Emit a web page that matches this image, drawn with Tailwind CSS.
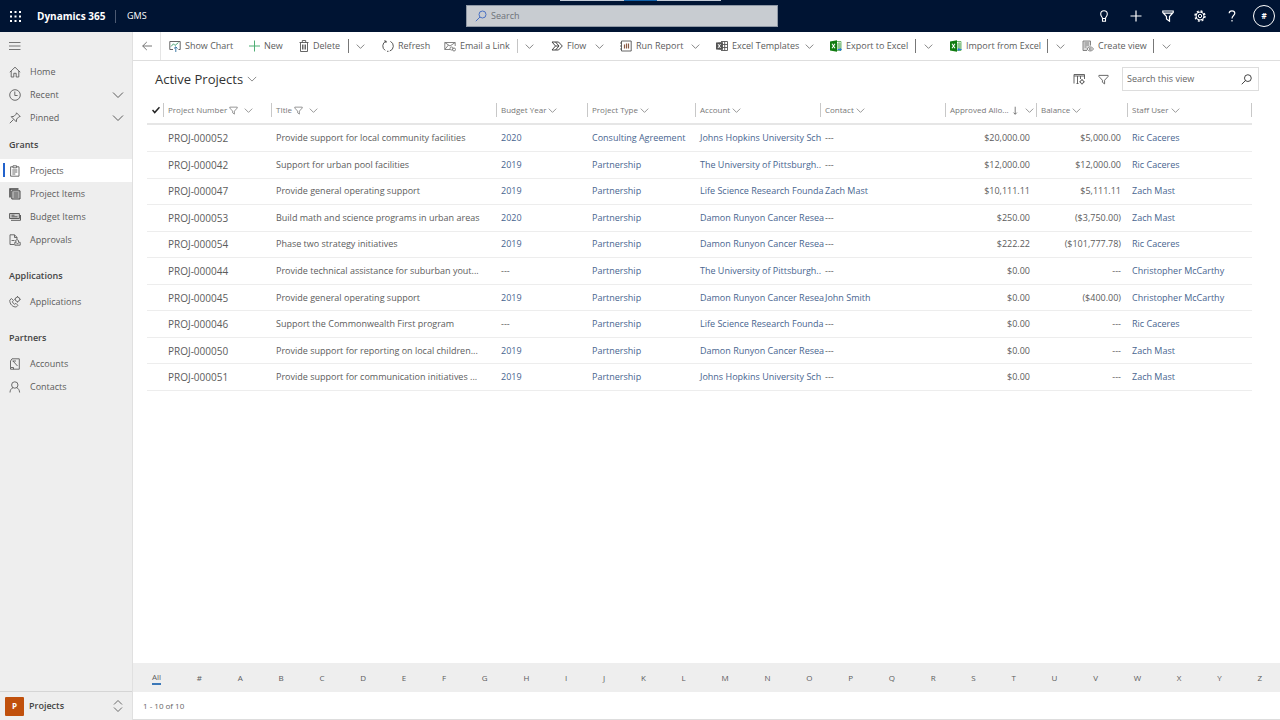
<!DOCTYPE html>
<html lang="en">
<head>
    <meta charset="UTF-8">
    <meta name="viewport" content="width=device-width, initial-scale=1.0">
    <title>Active Projects - Dynamics 365</title>
    <script src="https://cdn.jsdelivr.net/npm/@tailwindcss/browser@4"></script>
</head>
<body class="bg-white h-screen flex flex-col overflow-hidden font-['Open_Sans','Noto_Sans',sans-serif] text-[9px] leading-3 text-[#5c5c5c]">

    <!-- Shared icons -->
    <svg class="hidden">
        <symbol id="chevron" viewBox="0 0 12 12"><path d="M1 3.5l5 5 5-5" fill="none" stroke="currentColor"/></symbol>
        <symbol id="funnel" viewBox="0 0 12 12"><path d="M1 1.5h10v1.2L7.2 6.8v4L4.8 9V6.800L1 2.700z" fill="none" stroke="currentColor"/></symbol>
        <symbol id="excel" viewBox="0 0 12 12">
            <path d="M6.500 1.500h4.500v9H6.500M7 4h4M7 6h4M7 8h4M9 2v8" fill="none" stroke="#4fa64f" stroke-width=".8"/>
            <path d="M0 1.500L7 .3v11.400L0 10.500z" fill="#107c10"/>
            <path d="M2 3.800l3 4.400M5 3.800L2 8.200" stroke="#fff" stroke-width="1.100"/>
        </symbol>
    </svg>

    <header class="relative shrink-0 h-8 bg-[#001433] text-white grid grid-cols-[466fr_312fr_502fr] items-center">
        <div class="absolute top-0 left-[560px] w-[161px] h-px flex">
            <span class="flex-[4] bg-[#c3cad6]"></span><span class="flex-[2] bg-[#1160a8]"></span><span class="flex-[4] bg-[#c3cad6]"></span>
        </div>
        <div class="flex items-center pl-[10px]">
            <button aria-label="App launcher">
                <svg class="w-[11px] h-[11px]" viewBox="0 0 11 11" fill="currentColor">
                    <path d="M0 0h2v2H0zM4.500 0h2v2h-2zM9 0h2v2H9zM0 4.500h2v2H0zM4.500 4.500h2v2h-2zM9 4.500h2v2H9zM0 9h2v2H0zM4.500 9h2v2h-2zM9 9h2v2H9z"/>
                </svg>
            </button>
            <span class="ml-4 w-[78px] text-[10px] font-bold whitespace-nowrap">Dynamics 365</span>
            <span class="w-px h-[13px] bg-[#4d5a72]"></span>
            <span class="ml-[11px]">GMS</span>
        </div>
        <label class="h-[22px] flex items-center gap-1 px-2 bg-[#c8ccd1] border border-[#8f98a5] text-[#666]">
            <svg class="w-3 h-3 text-[#4a72c4]" viewBox="0 0 12 12" fill="none" stroke="currentColor"><circle cx="7.500" cy="4.500" r="3.500"/><path d="M5 7L.8 11.200"/></svg>
            <input type="text" aria-label="Search" placeholder="Search" class="flex-1 outline-none placeholder:text-[#6d7278]">
        </label>
        <div class="flex items-center justify-end gap-5 pr-[5px]">
            <button aria-label="Assistant"><svg class="w-3 h-3" viewBox="0 0 12 12" fill="none" stroke="currentColor" stroke-width="1.100"><path d="M4.500 8.500C4.500 7 2.700 6.300 2.700 4a3.300 3.300 0 016.600 0c0 2.300-1.800 3-1.800 4.500zM4.500 8.500v2.700h3V8.500"/></svg></button>
            <button aria-label="New record"><svg class="w-3 h-3" viewBox="0 0 12 12" fill="none" stroke="currentColor" stroke-width="1.200"><path d="M6 .5v11M.5 6h11"/></svg></button>
            <button aria-label="Advanced find"><svg class="w-3 h-3" viewBox="0 0 12 12" fill="none" stroke="currentColor" stroke-width="1.200"><path d="M.8 1h10.400v1.500L7.500 6.500v4.700L4.500 9V6.500L.8 2.500zM1.500 3.200h9"/></svg></button>
            <button aria-label="Settings"><svg class="w-3 h-3" viewBox="0 0 12 12" fill="none" stroke="currentColor"><circle cx="6" cy="6" r="1.700"/><circle cx="6" cy="6" r="4"/><circle cx="6" cy="6" r="5" stroke-width="1.400" stroke-dasharray="2 1.930"/></svg></button>
            <button aria-label="Help"><svg class="w-3 h-3" viewBox="0 0 12 12" fill="none" stroke="currentColor" stroke-width="1.200"><path d="M3.200 3.300C3.200 1.700 4.300.8 6 .8s2.800 1 2.800 2.500C8.800 5.500 6 5.500 6 8.500"/><path d="M6 10v1.500"/></svg></button>
            <button class="-ml-[5px] w-[22px] h-[22px] rounded-full border border-white text-[8px] font-bold">#</button>
        </div>
    </header>

    <div class="flex-1 flex min-h-0">
        <nav class="w-[133px] shrink-0 bg-[#eeeeee] border-r border-[#e0e0e0] flex flex-col">
            <button aria-label="Collapse menu" class="h-[28px] pl-[9px]">
                <svg class="w-3 h-3" viewBox="0 0 12 12" stroke="#555" stroke-width=".8"><path d="M0 2.500h11.500M0 6h11.500M0 9.500h11.500"/></svg>
            </button>
            <a href="#" class="h-[23px] flex items-center gap-[9px] pl-[9px]">
                <svg class="w-3 h-3" viewBox="0 0 12 12" fill="none" stroke="currentColor" stroke-width=".9"><path d="M.8 6.200L6 1.200l5.200 5M2.200 5v6h2.600V7.300h2.400V11h2.600V5"/></svg>
                Home
            </a>
            <button class="h-[23px] flex items-center gap-[9px] pl-[9px] pr-2">
                <svg class="w-3 h-3" viewBox="0 0 12 12" fill="none" stroke="currentColor" stroke-width=".9"><circle cx="6" cy="6" r="5.300"/><path d="M5.800 2.500v4H8.600"/></svg>
                Recent
                <svg class="ml-auto w-3 h-3"><use href="#chevron"/></svg>
            </button>
            <button class="h-[23px] flex items-center gap-[9px] pl-[9px] pr-2">
                <svg class="w-3 h-3" viewBox="0 0 12 12" fill="none" stroke="currentColor" stroke-width=".9"><path d="M7.500.8l3.700 3.700-1.300.3-2.200 2.200-.4 2.800L2.200 4.700l2.800-.4 2.200-2.200zM4.500 7.500L.8 11.200"/></svg>
                Pinned
                <svg class="ml-auto w-3 h-3"><use href="#chevron"/></svg>
            </button>

            <h2 class="mt-1 mb-[3px] h-[23px] pl-[9px] flex items-center font-semibold text-[#444]">Grants</h2>
            <a href="#" class="relative h-[23px] flex items-center gap-[9px] pl-[9px] bg-white">
                <span class="absolute left-[3px] top-1 w-[2px] h-[14px] bg-[#2262cc]"></span>
                <svg class="w-3 h-3" viewBox="0 0 12 12" fill="none" stroke="currentColor" stroke-width=".9"><path d="M4 1.800H1.600v9.400h8.400V1.800H7.600M4 .8h3.600v2H4zM3.300 5h5M3.300 7h5M3.300 9h3"/></svg>
                Projects
            </a>
            <a href="#" class="h-[23px] flex items-center gap-[9px] pl-[9px]">
                <svg class="w-3 h-3" viewBox="0 0 12 12" fill="none" stroke="#444"><path d="M2.800 2.800h8.200v8.200H2.800z" fill="#ccc"/><path d="M1 9.500V1h8.500" stroke-width="1.500"/><path d="M4.500 5h5M4.500 7h5M4.500 9h5"/></svg>
                Project Items
            </a>
            <a href="#" class="h-[23px] flex items-center gap-[9px] pl-[9px]">
                <svg class="w-3 h-3" viewBox="0 0 12 12" fill="none" stroke="currentColor"><path d="M.6 2.500h9.800v5H.6z" fill="#ccc"/><path d="M2 9.300h9.500V4M2.500 4.200h3M2.500 5.800h6"/></svg>
                Budget Items
            </a>
            <a href="#" class="h-[23px] flex items-center gap-[9px] pl-[9px]">
                <svg class="w-3 h-3" viewBox="0 0 12 12" fill="none" stroke="currentColor" stroke-width=".9"><path d="M5 10.500H1V.8h4.500l2.500 2.500V5M5.500.8v2.700H8M2.500 6.500h3"/><path d="M6.500 6.800c0-1.500 3-1.500 3 0v1.500h1.700v2.900H5.800V8.300h1.500zM7.500 9.700h2"/></svg>
                Approvals
            </a>

            <h2 class="mt-[13px] mb-[3px] h-[23px] pl-[9px] flex items-center font-semibold text-[#444]">Applications</h2>
            <a href="#" class="h-[23px] flex items-center gap-[9px] pl-[9px]">
                <svg class="w-3 h-3" viewBox="0 0 12 12" fill="none" stroke="currentColor" stroke-width=".9"><path d="M.8 4.200l1.600-1.700 2 2-1 1.300c.4 1.200 1.200 2 2.300 2.500l1.200-1 2 2-1.500 1.600C4 11.500.5 8 .8 4.200z"/><circle cx="8.500" cy="3.300" r="2.200"/><path d="M8.500 0v1M8.500 5.600v1M5.200 3.300h1M10.800 3.300h1"/></svg>
                Applications
            </a>

            <h2 class="mt-[13px] mb-[3px] h-[23px] pl-[9px] flex items-center font-semibold text-[#444]">Partners</h2>
            <a href="#" class="h-[23px] flex items-center gap-[9px] pl-[9px]">
                <svg class="w-3 h-3" viewBox="0 0 12 12" fill="none" stroke="currentColor" stroke-width=".9"><path d="M3 .8h7.300v10.400H1.500V9.500M3 .8L1.500 3v6.500h3M4 3l4.500 5M4.500 9.500v1.700M3.500 3H7"/></svg>
                Accounts
            </a>
            <a href="#" class="h-[23px] flex items-center gap-[9px] pl-[9px]">
                <svg class="w-3 h-3" viewBox="0 0 12 12" fill="none" stroke="currentColor" stroke-width=".9"><circle cx="5.800" cy="4" r="3.200"/><path d="M1 11.500c0-2.500 1.500-4.300 3-4.800M10.600 11.500c0-2.500-1.500-4.300-3-4.800"/></svg>
                Contacts
            </a>

            <button class="mt-auto h-[29px] border-t border-[#d5d5d5] flex items-center pl-[5px] pr-2">
                <span class="w-[19px] h-[19px] rounded-[1px] bg-[#c0500c] text-white text-[8px] font-bold flex items-center justify-center">P</span>
                <span class="ml-[5px] font-semibold text-[#444]">Projects</span>
                <svg class="ml-auto w-3 h-3" viewBox="0 0 12 12" fill="none" stroke="currentColor" stroke-width=".9"><path d="M2 4.500l4-4 4 4M2 7.500l4 4 4-4"/></svg>
            </button>
        </nav>

        <main class="flex-1 min-w-0 flex flex-col">
            <!-- Command bar -->
            <div class="h-[29px] shrink-0 border-b border-[#dedede] flex items-center whitespace-nowrap overflow-hidden">
                <button aria-label="Back" class="w-7 h-full border-r border-[#e5e5e5] flex items-center justify-center">
                    <svg class="w-[10px] h-[10px]" viewBox="0 0 10 10" fill="none" stroke="#666" stroke-width=".9"><path d="M10 5H.7M4.800 1L.7 5l4.100 4"/></svg>
                </button>
                <button class="ml-2 w-[79px] flex items-center gap-1">
                    <svg class="w-3 h-3" viewBox="0 0 12 12" fill="none" stroke="#555" stroke-width=".9"><path d="M4 9.500H.8v-8h10.400v8H9.500"/><path d="M2 6.500l2.500-2.700L6 5.500l3.500-3" stroke="#3a9a6a"/><path d="M6.800 12V7M5 8.500L6.800 6.800l1.700 1.700" stroke="#2b6c9c"/></svg>
                    Show Chart
                </button>
                <button class="w-[50px] flex items-center gap-1">
                    <svg class="w-3 h-3" viewBox="0 0 12 12" stroke="#4fae75"><path d="M6.500 .5v11M1 6h11"/></svg>
                    New
                </button>
                <button class="w-[50px] flex items-center gap-[3px]">
                    <svg class="w-3 h-3" viewBox="0 0 12 12" fill="none" stroke="#555" stroke-width=".9"><path d="M1.500 2.500h9M4.300 2.500v-2h3.400v2M2.500 2.500v9h7v-9M4.500 4.500v5M6 4.500v5M7.500 4.500v5"/></svg>
                    Delete
                </button>
                <span class="w-px h-[14px] bg-[#777]"></span>
                <button aria-label="More delete options" class="w-[33px] pl-[7px]"><svg class="w-[9px] h-[9px]"><use href="#chevron"/></svg></button>
                <button class="w-[62px] flex items-center gap-1">
                    <svg class="w-3 h-3" viewBox="0 0 12 12" fill="none" stroke="#444" stroke-width=".9"><path d="M4 1.200a5.200 5.200 0 00-.8 9.200M7.800 11a5.200 5.200 0 00.6-9.600M5 11.300h1.500M2.200 .8L4.300 1.200 3.800 3"/></svg>
                    Refresh
                </button>
                <button class="w-[73px] flex items-center gap-1">
                    <svg class="w-3 h-3" viewBox="0 0 12 12" fill="none" stroke="#777" stroke-width=".9"><path d="M6 9.500H.8V2.500h10.400V6M.8 2.500L6 6l5.200-3.500M.8 9.500L4.500 5"/><circle cx="7.500" cy="8.500" r="1.500"/><circle cx="10" cy="9.500" r="1.500"/></svg>
                    Email a Link
                </button>
                <span class="w-px h-[14px] bg-[#c5c5c5]"></span>
                <button aria-label="More email options" class="w-[33px] pl-[7px]"><svg class="w-[9px] h-[9px]"><use href="#chevron"/></svg></button>
                <button class="w-[69px] flex items-center gap-1">
                    <svg class="w-3 h-3" viewBox="0 0 12 12" fill="none" stroke="#444"><path d="M1 2h6.500l3.800 4-3.800 4H1l3.500-4zM4.500 2L8 6l-3.500 4M4.500 6H8"/></svg>
                    <span class="w-6 text-left">Flow</span>
                    <svg class="w-[9px] h-[9px]"><use href="#chevron"/></svg>
                </button>
                <button class="w-24 flex items-center gap-1">
                    <svg class="w-3 h-3" viewBox="0 0 12 12" fill="none" stroke="#555" stroke-width=".9"><path d="M1.500 1h9.700v10H1.500zM0 3h2M0 6h2M0 9h2"/><path d="M4.500 8.500v-4M6.500 8.500v-5M8.500 8.500v-5" stroke="#8a5a44" stroke-width="1.200"/></svg>
                    <span class="w-[51px] text-left">Run Report</span>
                    <svg class="w-[9px] h-[9px]"><use href="#chevron"/></svg>
                </button>
                <button class="w-[114px] flex items-center gap-1">
                    <svg class="w-3 h-3" viewBox="0 0 12 12" fill="none" stroke="#555" stroke-width=".9"><path d="M5 1.500h6.500v9H5M6 4.500h5.500M6 7.500h5.500M8.700 1.500v9"/><path d="M0 3l6.500-.5v7L0 9z" fill="#555"/><path d="M2 4l2.500 4M4.500 4L2 8" stroke="#fff"/></svg>
                    <span class="w-[69px] text-left">Excel Templates</span>
                    <svg class="w-[9px] h-[9px]"><use href="#chevron"/></svg>
                </button>
                <button class="w-[85px] flex items-center gap-1">
                    <svg class="w-3 h-3" viewBox="0 0 12 12"><use href="#excel"/><path d="M7.500 9.500h3.500M9.800 8l1.500 1.500L9.800 11" fill="none" stroke="#2b7cd3"/></svg>
                    Export to Excel
                </button>
                <span class="w-px h-[14px] bg-[#777]"></span>
                <button aria-label="More export options" class="w-[34px] pl-2"><svg class="w-[9px] h-[9px]"><use href="#chevron"/></svg></button>
                <button class="w-[97px] flex items-center gap-1">
                    <svg class="w-3 h-3" viewBox="0 0 12 12"><use href="#excel"/><path d="M11.500 9.500H8M9.300 8L7.800 9.500 9.300 11" fill="none" stroke="#2b7cd3"/></svg>
                    Import from Excel
                </button>
                <span class="w-px h-[14px] bg-[#777]"></span>
                <button aria-label="More import options" class="w-[34px] pl-2"><svg class="w-[9px] h-[9px]"><use href="#chevron"/></svg></button>
                <button class="w-[71px] flex items-center gap-1">
                    <svg class="w-3 h-3" viewBox="0 0 12 12" fill="none" stroke="#777" stroke-width=".9"><path d="M5 10.500H1V1h7.500v4.500" fill="#ddd"/><path d="M2.500 3h4.500M2.500 5h4.500M2.500 7h2M5 9c1.500-2.800 5-2.800 6.500 0-1.500 2.600-5 2.600-6.500 0z"/><circle cx="8.300" cy="9" r="1"/></svg>
                    Create view
                </button>
                <span class="w-px h-[14px] bg-[#777]"></span>
                <button aria-label="More view options" class="pl-2"><svg class="w-[9px] h-[9px]"><use href="#chevron"/></svg></button>
            </div>

            <!-- View title and view search -->
            <div class="h-9 shrink-0 flex items-center pl-[22px] pr-[21px]">
                <h1><button class="flex items-center gap-1 text-[13px] leading-4 font-medium text-[#333]">Active Projects <svg class="w-[10px] h-[10px] text-[#777]"><use href="#chevron"/></svg></button></h1>
                <button aria-label="Edit columns" class="ml-auto">
                    <svg class="w-3 h-3" viewBox="0 0 12 12" fill="none" stroke="#555" stroke-width=".9"><path d="M1 10.500V1.500h10.500V6M1 3h10.500M4.500 3v7.500M3.500 10.500h2M7.500 3v3"/><circle cx="9" cy="8.800" r="1.700"/><path d="M9 6v1M9 10.500v1M6.300 8.800h1M10.700 8.800h1"/></svg>
                </button>
                <button aria-label="Edit filters" class="ml-[13px] mr-[13px]"><svg class="w-[11px] h-[11px]"><use href="#funnel"/></svg></button>
                <label class="w-[137px] h-6 flex items-center px-1 border border-[#ddd]">
                    <input type="text" aria-label="Search this view" placeholder="Search this view" class="flex-1 min-w-0 outline-none placeholder:text-[#666]">
                    <svg class="w-[11px] h-[11px] mr-[2px]" viewBox="0 0 12 12" fill="none" stroke="#333"><circle cx="7.500" cy="4.500" r="3.700"/><path d="M5 7L.8 11.200"/></svg>
                </label>
            </div>

            <div class="flex-1 min-h-0 overflow-hidden pl-[14px] pr-7">
                <table class="w-full h-[294px] table-fixed border-collapse whitespace-nowrap">
                    <colgroup>
                        <col class="w-4"><col class="w-[108px]"><col class="w-[225px]"><col class="w-[91px]"><col class="w-[108px]">
                        <col class="w-[125px]"><col class="w-[125px]"><col class="w-[91px]"><col class="w-[91px]"><col>
                    </colgroup>
                    <thead id="gridHead" class="border-b-2 border-[#e6e6e6] text-[8px] text-[#777]"></thead>
                    <tbody id="gridBody"></tbody>
                </table>
            </div>

            <!-- Jump bar -->
            <div id="jumpBar" class="h-[29px] shrink-0 bg-[#eeeeee] pl-[19px] pr-[18px] flex items-center justify-between text-[8px]">
                <button class="border-b-2 border-[#3b78b8]">All</button>
            </div>
            <div class="h-7 shrink-0 border-b border-[#ddd] pl-[10px] flex items-center text-[8px] text-[#666]">1 - 10 of 10</div>
        </main>
    </div>

    <script>
        const columns = [
            { label: 'Project Number', filtered: true },
            { label: 'TItle', filtered: true },
            { label: 'Budget Year' },
            { label: 'Project Type' },
            { label: 'Account' },
            { label: 'Contact' },
            { label: 'Approved Allo...', sorted: true },
            { label: 'Balance' },
            { label: 'Staff User' }
        ];

        const projects = [
            ['PROJ-000052', 'Provide support for local community facilities', '2020', 'Consulting Agreement', 'Johns Hopkins University Sch', '---', '$20,000.00', '$5,000.00', 'Ric Caceres'],
            ['PROJ-000042', 'Support for urban pool facilities', '2019', 'Partnership', 'The University of Pittsburgh..', '---', '$12,000.00', '$12,000.00', 'Ric Caceres'],
            ['PROJ-000047', 'Provide general operating support', '2019', 'Partnership', 'Life Science Research Founda', 'Zach Mast', '$10,111.11', '$5,111.11', 'Zach Mast'],
            ['PROJ-000053', 'Build math and science programs in urban areas', '2020', 'Partnership', 'Damon Runyon Cancer Resea', '---', '$250.00', '($3,750.00)', 'Zach Mast'],
            ['PROJ-000054', 'Phase two strategy initiatives', '2019', 'Partnership', 'Damon Runyon Cancer Resea', '---', '$222.22', '($101,777.78)', 'Ric Caceres'],
            ['PROJ-000044', 'Provide technical assistance for suburban yout...', '---', 'Partnership', 'The University of Pittsburgh..', '---', '$0.00', '---', 'Christopher McCarthy'],
            ['PROJ-000045', 'Provide general operating support', '2019', 'Partnership', 'Damon Runyon Cancer Resea', 'John Smith', '$0.00', '($400.00)', 'Christopher McCarthy'],
            ['PROJ-000046', 'Support the Commonwealth First program', '---', 'Partnership', 'Life Science Research Founda', '---', '$0.00', '---', 'Ric Caceres'],
            ['PROJ-000050', 'Provide support for reporting on local children...', '2019', 'Partnership', 'Damon Runyon Cancer Resea', '---', '$0.00', '---', 'Zach Mast'],
            ['PROJ-000051', 'Provide support for communication initiatives ...', '2019', 'Partnership', 'Johns Hopkins University Sch', '---', '$0.00', '---', 'Zach Mast']
        ];

        // Header row
        const chevron = '<svg class="shrink-0 w-[9px] h-[9px]"><use href="#chevron"/></svg>';
        const funnel = '<svg class="shrink-0 w-[9px] h-[9px] mr-1"><use href="#funnel"/></svg>';
        const arrow = '<svg class="ml-auto mr-1 w-[9px] h-[9px]" viewBox="0 0 10 10" fill="none" stroke="#666"><path d="M5 .5v9M3 7.500l2 2 2-2"/></svg>';
        document.getElementById('gridHead').innerHTML = '<tr class="h-[27px]"><th class="pl-[5px]">' +
            '<svg class="w-2 h-2" viewBox="0 0 8 8" fill="none" stroke="#222" stroke-width="1.500"><path d="M.5 4l2.200 2.500L7.500 1.200"/></svg></th>' +
            columns.map((c, i) => `
                <th class="p-0 font-normal">
                    <div class="h-[14px] flex items-center gap-[2px] pl-1 pr-[2px] border-l border-[#c8c8c8] ${i === 8 ? 'border-r' : ''}">
                        ${c.label}${c.filtered ? funnel : ''}${c.sorted ? arrow : ''}${chevron}
                    </div>
                </th>`).join('') + '</tr>';

        // Lookup and option columns are links, amounts are right aligned
        document.getElementById('gridBody').innerHTML = projects.map(row =>
            '<tr class="border-b border-[#ededed]"><td class="p-0"></td>' + row.map((value, i) => {
                if (i === 0) return `<td class="p-0 pl-[5px] text-[10px]">${value}</td>`;
                if (i === 6 || i === 7) return `<td class="p-0 pr-[6px] text-right">${value}</td>`;
                if (i === 1 || value === '---') return `<td class="p-0 pl-[5px]">${value}</td>`;
                return `<td class="p-0 pl-[5px]"><a href="#" class="text-[#48658f]">${value}</a></td>`;
            }).join('') + '</tr>').join('');

        // Letters of the jump bar
        document.getElementById('jumpBar').innerHTML += '#ABCDEFGHIJKLMNOPQRSTUVWXYZ'.split('')
            .map(letter => `<button>${letter}</button>`).join('');
    </script>
</body>
</html>
